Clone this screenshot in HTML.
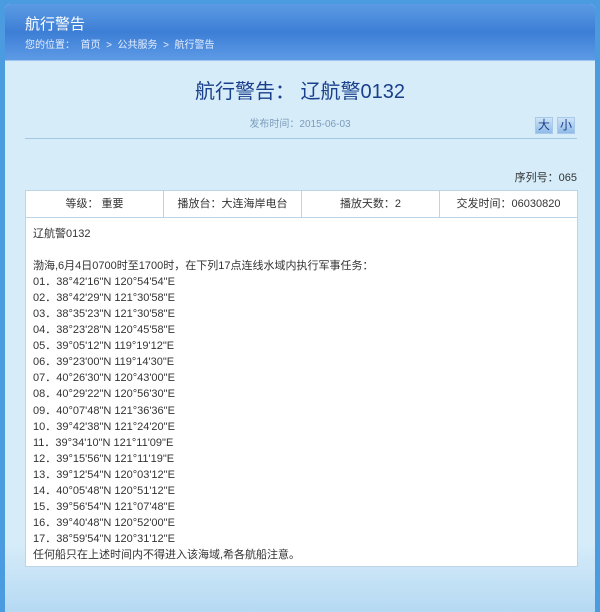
<!DOCTYPE html>
<html><head><meta charset="utf-8"><style>
*{margin:0;padding:0;box-sizing:border-box}
body{width:600px;height:612px;background:#4b9be0;font-family:"Liberation Sans","Noto Sans CJK SC",sans-serif;position:relative;overflow:hidden}
.frame{position:absolute;left:5px;top:4px;width:590px;height:608px;border-radius:5px 5px 0 0;background:linear-gradient(#d6ecf9 0,#d6ecf9 540px,#b5d9f3 608px);overflow:hidden}
.hd{height:57px;background:linear-gradient(#5b9be3,#3d7ed6 50%,#5d9ae6);border-bottom:1px solid #9cc4ee;color:#fff;padding-left:20px;position:relative}
.hd h1{position:absolute;top:11px;left:20px;font-size:15px;font-weight:normal;line-height:20px}
.hd p{position:absolute;top:35px;left:20px;font-size:10px;line-height:14px;color:#e6efff}
.title{position:absolute;top:76px;left:0;width:590px;text-align:center;font-size:20px;line-height:24px;color:#1a3f8c}
.date{position:absolute;top:114px;left:0;width:590px;text-align:center;font-size:10px;line-height:14px;color:#7c9cbc}
.btn{position:absolute;top:113px;width:18px;height:17px;background:linear-gradient(#cfe3f7,#8fbbe8);border:1px solid #a9c9ea;font-size:12px;color:#1a3f8c;text-align:center;line-height:15px}
.line{position:absolute;top:134px;left:20px;width:552px;border-top:1px solid #a4c6e0}
.seq{position:absolute;top:167px;right:18px;font-size:11px;line-height:14px;color:#333}
.tbl{position:absolute;top:186px;left:20px;width:553px;height:28px;display:flex;background:#fff;border:1px solid #bcd4e6}
.tbl div{flex:1;text-align:center;font-size:11px;color:#333;line-height:26px;border-right:1px solid #bcd4e6}
.tbl div:last-child{border-right:none}
.box{position:absolute;top:213px;left:20px;width:553px;height:350px;background:#fff;border:1px solid #bcd4e6;padding:8px 7px;font-size:11px;color:#333}
.box div{height:16.05px;line-height:16px;white-space:nowrap}
</style></head><body><div class="frame">
<div class="hd"><h1>航行警告</h1><p>您的位置：&nbsp; 首页 &nbsp;&gt;&nbsp; 公共服务 &nbsp;&gt;&nbsp; 航行警告</p></div>
<div class="title">航行警告： 辽航警0132</div>
<div class="date">发布时间：2015-06-03</div>
<div class="btn" style="left:530px">大</div><div class="btn" style="left:552px">小</div>
<div class="line"></div>
<div class="seq">序列号：065</div>
<div class="tbl"><div>等级： 重要</div><div>播放台：大连海岸电台</div><div>播放天数：2</div><div>交发时间：06030820</div></div>
<div class="box"><div>辽航警0132</div><div></div><div>渤海,6月4日0700时至1700时，在下列17点连线水域内执行军事任务：</div>
<div>01．38°42'16"N 120°54'54"E</div><div>02．38°42'29"N 121°30'58"E</div><div>03．38°35'23"N 121°30'58"E</div><div>04．38°23'28"N 120°45'58"E</div><div>05．39°05'12"N 119°19'12"E</div><div>06．39°23'00"N 119°14'30"E</div><div>07．40°26'30"N 120°43'00"E</div><div>08．40°29'22"N 120°56'30"E</div><div>09．40°07'48"N 121°36'36"E</div><div>10．39°42'38"N 121°24'20"E</div><div>11．39°34'10"N 121°11'09"E</div><div>12．39°15'56"N 121°11'19"E</div><div>13．39°12'54"N 120°03'12"E</div><div>14．40°05'48"N 120°51'12"E</div><div>15．39°56'54"N 121°07'48"E</div><div>16．39°40'48"N 120°52'00"E</div><div>17．38°59'54"N 120°31'12"E</div><div>任何船只在上述时间内不得进入该海域,希各航船注意。</div></div>
</div></body></html>
